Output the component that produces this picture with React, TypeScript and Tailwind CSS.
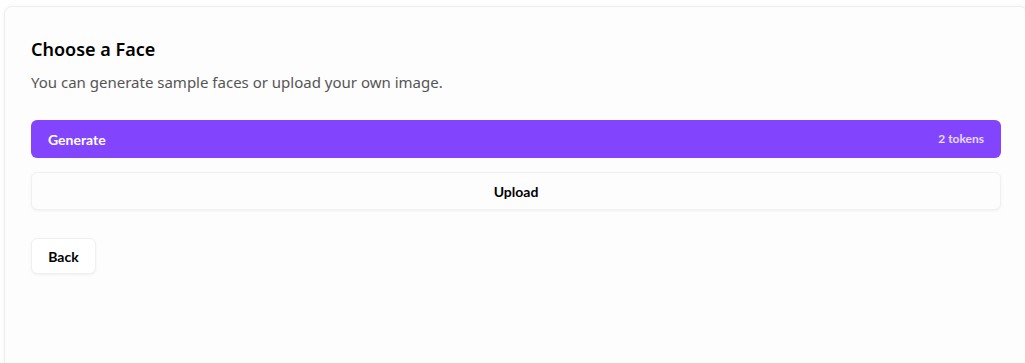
export default function App() {
  return (
    <div className="h-[363px] w-[1025px] overflow-hidden bg-white pl-[4px] pt-[6px]" style={{ fontFamily: '"Noto Sans", "Open Sans", sans-serif' }}>
      <div className="h-[400px] w-[1024px] rounded-[8px] border border-[#eeeeee] bg-[#fdfdfd] px-[26px] pt-[30px] shadow-[0_0_4px_rgba(0,0,0,0.04)]">
        <h2 className="text-[18px] font-semibold leading-[24px] text-black">Choose a Face</h2>
        <p className="mt-[10px] text-[15px] leading-[22px] text-[#555555]">
          You can generate sample faces or upload your own image.
        </p>
        <div className="mt-[27px] flex flex-col gap-[14px]">
          <button className="flex h-[38px] w-full items-center justify-between rounded-[6px] bg-[#8344fe] px-[17px] text-white" style={{ fontFamily: 'Lato, sans-serif' }}>
            <span className="text-[14px] font-bold">Generate</span>
            <span className="text-[12px] font-bold text-white/80">2 tokens</span>
          </button>
          <button className="flex h-[38px] w-full items-center justify-center rounded-[6px] border border-[#f0f0f0] bg-[#fdfdfd] text-[14px] font-bold text-black shadow-[0_1px_3px_rgba(0,0,0,0.05)]" style={{ fontFamily: 'Lato, sans-serif' }}>
            Upload
          </button>
        </div>
        <button className="mt-[28px] flex h-[36px] w-[65px] items-center justify-center rounded-[6px] border border-[#f0f0f0] bg-white text-[14px] font-bold text-black shadow-[0_1px_3px_rgba(0,0,0,0.05)]" style={{ fontFamily: 'Lato, sans-serif' }}>
          Back
        </button>
      </div>
    </div>
  );
}
